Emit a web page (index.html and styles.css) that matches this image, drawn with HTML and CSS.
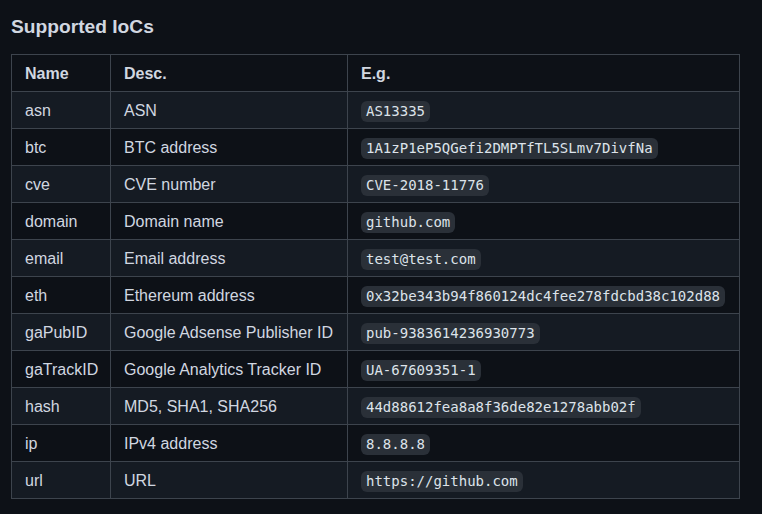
FILE: index.html
```html
<!DOCTYPE html>
<html>
<head>
<meta charset="utf-8">
<link rel="stylesheet" href="styles.css">
</head>
<body>
<div class="page">
  <h3 class="title">Supported IoCs</h3>
  <table class="ioc">
    <colgroup><col class="c1"><col class="c2"><col class="c3"></colgroup>
    <thead>
      <tr><th>Name</th><th>Desc.</th><th>E.g.</th></tr>
    </thead>
    <tbody>
      <tr><td>asn</td><td>ASN</td><td><code>AS13335</code></td></tr>
      <tr><td>btc</td><td>BTC address</td><td><code>1A1zP1eP5QGefi2DMPTfTL5SLmv7DivfNa</code></td></tr>
      <tr><td>cve</td><td>CVE number</td><td><code>CVE-2018-11776</code></td></tr>
      <tr><td>domain</td><td>Domain name</td><td><code>github.com</code></td></tr>
      <tr><td>email</td><td>Email address</td><td><code>test@test.com</code></td></tr>
      <tr><td>eth</td><td>Ethereum address</td><td><code>0x32be343b94f860124dc4fee278fdcbd38c102d88</code></td></tr>
      <tr><td>gaPubID</td><td>Google Adsense Publisher ID</td><td><code>pub-9383614236930773</code></td></tr>
      <tr><td>gaTrackID</td><td>Google Analytics Tracker ID</td><td><code>UA-67609351-1</code></td></tr>
      <tr><td>hash</td><td>MD5, SHA1, SHA256</td><td><code>44d88612fea8a8f36de82e1278abb02f</code></td></tr>
      <tr><td>ip</td><td>IPv4 address</td><td><code>8.8.8.8</code></td></tr>
      <tr><td>url</td><td>URL</td><td><code>https://github.com</code></td></tr>
    </tbody>
  </table>
</div>
</body>
</html>
```
FILE: styles.css
```css
html, body {
  margin: 0;
  padding: 0;
  background: #0d1117;
}
body {
  font-family: "Liberation Sans", Arial, sans-serif;
  font-size: 16px;
  color: #d1d7e0;
}
.page {
  padding: 14px 11px 0 11px;
}
.title {
  margin: 0 0 15px 0;
  font-size: 19.2px;
  line-height: 25px;
  font-weight: 700;
  color: #d1d7e0;
}
.ioc {
  border-collapse: collapse;
  table-layout: fixed;
  width: 729px;
}
.c1 { width: 99px; }
.c2 { width: 237px; }
.ioc th, .ioc td {
  border: 1px solid #3d444d;
  padding: 7px 13px 5px 13px;
  line-height: 24px;
  text-align: left;
  white-space: nowrap;
}
.ioc th {
  font-weight: 700;
}
.ioc tbody tr:nth-child(odd) {
  background: #151b23;
}
.ioc tbody tr:nth-child(even) {
  background: #0d1117;
}
.ioc thead tr {
  background: #0d1117;
}
code {
  font-family: "DejaVu Sans Mono", monospace;
  font-size: 14px;
  line-height: 21px;
  display: inline-block;
  vertical-align: middle;
  padding: 0 5px;
  border-radius: 6px;
  background: #2a3038;
  color: #dde3ea;
}
```
